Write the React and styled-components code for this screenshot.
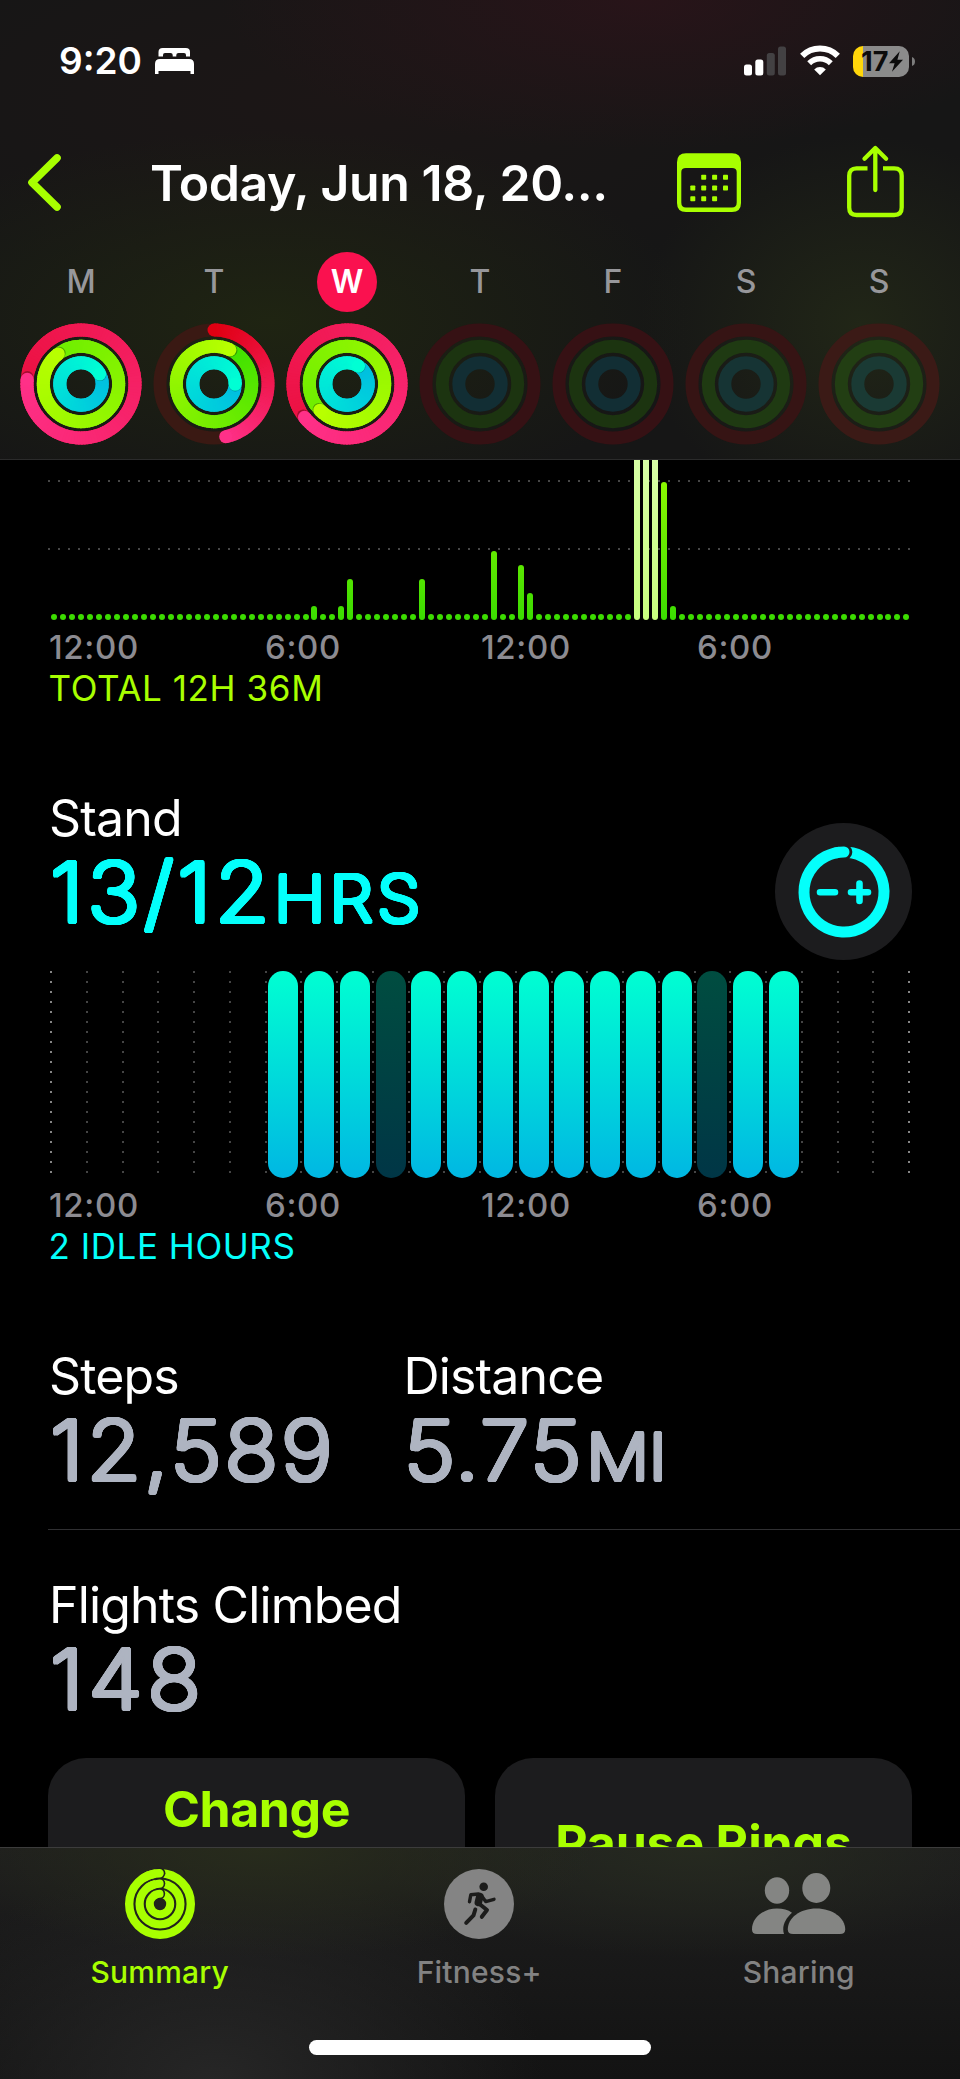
import React from "react";
import styled, { createGlobalStyle } from "styled-components";

const GlobalStyle = createGlobalStyle`
  * { box-sizing: border-box; }
  html, body { margin: 0; padding: 0; background: #000; }
  body { font-family: Inter, "Liberation Sans", sans-serif; -webkit-font-smoothing: antialiased; }
  svg { display: block; flex: none; overflow: visible; }
`;

const Screen = styled.div`
  width: 960px;
  height: 2079px;
  overflow: hidden;
  display: flex;
  flex-direction: column;
  background: #000;
`;

const Label = styled.span`
  display: block;
  white-space: nowrap;
  font-size: ${(p) => p.$size}px;
  font-weight: ${(p) => p.$weight || 400};
  letter-spacing: ${(p) => p.$track || 0}px;
  color: ${(p) => p.$color || "#fff"};
  line-height: ${(p) => p.$line || 40}px;
`;

/* ---------- header ---------- */

const Header = styled.header`
  flex: none;
  height: 460px;
  border-bottom: 1px solid #2b2b2b;
  display: flex;
  flex-direction: column;
  background:
    radial-gradient(420px 150px at 640px 0px, #281419 0%, rgba(38, 20, 24, 0) 100%),
    radial-gradient(420px 190px at 270px 320px, #1f2412 0%, rgba(31, 36, 18, 0) 100%),
    radial-gradient(220px 190px at 860px 325px, #212617 0%, rgba(33, 38, 23, 0) 100%),
    radial-gradient(500px 200px at 330px 100px, #1c1616 0%, rgba(28, 22, 22, 0) 100%),
    #161616;
`;

const StatusBar = styled.div`
  height: 122px;
  display: flex;
  align-items: center;
  padding: 0 45px 0 59px;
`;

const Time = styled(Label)`
  width: 96px;
`;

const StatusIcons = styled.div`
  margin-left: auto;
  display: flex;
  align-items: center;
  gap: 13px;
`;

const BatteryGroup = styled.div`
  display: flex;
  align-items: center;
`;

const Battery = styled.div`
  width: 56px;
  height: 31px;
  border-radius: 10px;
  background: linear-gradient(90deg, #ffd60a 10px, #8b8b8b 10px);
  display: flex;
  align-items: center;
  gap: 1px;
  padding-left: 8px;
`;

const NavBar = styled.nav`
  height: 122px;
  display: flex;
  align-items: center;
  padding: 0 56px 0 28px;
`;

const Title = styled(Label)`
  width: 527px;
  margin-left: 88px;
`;

const NavActions = styled.div`
  display: flex;
  align-items: center;
  gap: 106px;
`;

const Week = styled.div`
  display: grid;
  grid-template-columns: repeat(7, 133px);
  padding: 8px 0 0 14.5px;
`;

const Day = styled.div`
  display: flex;
  flex-direction: column;
  align-items: center;
  gap: 11px;
`;

const DayName = styled.div`
  width: 60px;
  height: 60px;
  border-radius: 50%;
  display: flex;
  align-items: center;
  justify-content: center;
  font-size: 32px;
  font-weight: ${(p) => (p.$today ? 600 : 550)};
  line-height: 60px;
  color: ${(p) => (p.$today ? "#fff" : "#97979b")};
  background: ${(p) => (p.$today ? "#fa114f" : "transparent")};
`;

const polar = (r, deg) => {
  const a = ((deg - 90) * Math.PI) / 180;
  return [61 + r * Math.cos(a), 61 + r * Math.sin(a)];
};

const mix = (a, b, t) =>
  `rgb(${a.map((v, i) => Math.round(v + (b[i] - v) * t)).join(",")})`;

function Ring({ r, tip, lap, from, to, track }) {
  if (tip === undefined) {
    return <circle cx="61" cy="61" r={r} fill="none" stroke={track} strokeWidth="13" />;
  }
  const start = lap ? tip - 352 : 0;
  const steps = 120;
  const size = (tip - start) / steps;
  const [cx, cy] = polar(r, tip);
  const [sx, sy] = polar(r, tip + 2);
  const [ox, oy] = polar(r, 0);
  return (
    <g>
      <circle cx="61" cy="61" r={r} fill="none" stroke={lap ? mix(from, to, 0) : track} strokeWidth="13" />
      {!lap && <circle cx={ox} cy={oy} r="6.5" fill={mix(from, to, 0)} />}
      {Array.from({ length: steps }, (_, i) => {
        const a = start + i * size;
        const [x1, y1] = polar(r, a);
        const [x2, y2] = polar(r, Math.min(a + size * 1.6, tip));
        return (
          <path
            key={i}
            d={`M${x1} ${y1}A${r} ${r} 0 0 1 ${x2} ${y2}`}
            fill="none"
            stroke={mix(from, to, i / (steps - 1))}
            strokeWidth="13"
          />
        );
      })}
      {lap && <circle cx={sx} cy={sy} r="6.3" fill="#000" opacity="0.3" />}
      <circle cx={cx} cy={cy} r="6.5" fill={mix(from, to, 1)} />
    </g>
  );
}

const MOVE_A = [224, 0, 18];
const MOVE_B = [255, 48, 136];
const MOVE_M = [236, 18, 68];
const EX_A = [66, 226, 0];
const EX_B = [184, 255, 0];
const EX_M = [112, 238, 0];
const ST_A = [0, 190, 224];
const ST_B = [0, 255, 212];

const week = [
  { name: "M", move: [275, true, MOVE_M, MOVE_B], ex: [323, true, EX_M, EX_B], stand: [62, true, ST_A, ST_B] },
  { name: "T", move: [167.5, false, MOVE_A, MOVE_B], ex: [25, true, EX_A, EX_B], stand: [91, true, ST_A, ST_B] },
  { name: "W", today: true, move: [232, true, MOVE_M, MOVE_B], ex: [226, true, EX_M, EX_B], stand: [33, true, ST_A, ST_B] },
  { name: "T" },
  { name: "F" },
  { name: "S", warm: 1 },
  { name: "S", warm: 2 },
];

function DayRings({ day }) {
  const ring = (r, v, track) =>
    v ? (
      <Ring r={r} tip={v[0]} lap={v[1]} from={v[2]} to={v[3]} track={track} />
    ) : (
      <Ring r={r} track={track} />
    );
  const red = ["#361114", "#361414", "#3b1a16"][day.warm || 0];
  return (
    <svg width="122" height="122" viewBox="0 0 122 122">
      {ring(54, day.move, day.move ? "#3a1913" : red)}
      {ring(37.7, day.ex, ["#1c3410", "#1f3a12", "#223e13"][day.warm || 0])}
      {ring(21.2, day.stand, ["#122e34", "#163434", "#1a3a34"][day.warm || 0])}
    </svg>
  );
}

/* ---------- content ---------- */

const Main = styled.main`
  height: 1387px;
  flex: none;
  overflow: hidden;
  padding-left: 48px;
  display: flex;
  flex-direction: column;
`;

const ExerciseChart = styled.div`
  width: 864px;
  height: 160px;
  flex: none;
  overflow: hidden;
  display: flex;
  align-items: flex-end;
  justify-content: space-between;
  padding: 0 2.5px 0 3.4px;
  background:
    repeating-linear-gradient(90deg, #474747 0 2px, transparent 2px 10px) 0 20px / 862px 2px no-repeat,
    repeating-linear-gradient(90deg, #474747 0 2px, transparent 2px 10px) 0 88px / 862px 2px no-repeat;
`;

const ExerciseBar = styled.i`
  width: 6px;
  height: ${(p) => p.$h}px;
  flex: none;
  border-radius: 3px;
  background: ${(p) =>
    p.$peak
      ? "linear-gradient(0deg, #c8ff7e, #d8ffa6 160px)"
      : "linear-gradient(0deg, #3adc00, #92fa00 150px)"};
`;

const TimeAxis = styled.div`
  width: 864px;
  height: 40px;
  flex: none;
  margin-top: 7px;
  display: grid;
  grid-template-columns: repeat(4, 216px);
  padding-left: 1px;
`;

const Footnote = styled(Label)`
  flex: none;
  margin-left: 0.5px;
`;

const SectionHead = styled.div`
  width: 864px;
  height: 172px;
  flex: none;
  margin-top: 78px;
  display: flex;
  justify-content: space-between;
`;

const Metric = styled.div`
  width: ${(p) => (p.$w ? `${p.$w}px` : "auto")};
  flex: none;
  padding-left: 1px;
`;

/* Thin strokes thickened evenly in all directions give the rounded numerals. */
const roundOff = (color, r) =>
  Array.from({ length: 24 }, (_, i) => {
    const a = (i * Math.PI) / 12;
    return `${(r * Math.cos(a)).toFixed(2)}px ${(r * Math.sin(a)).toFixed(2)}px 0 ${color}`;
  }).join(", ");

const Value = styled(Label)`
  width: max-content;
  margin: 0 0 -2px 0.5px;
  font-size: 82.5px;
  font-weight: 200;
  line-height: 88px;
  transform: scaleX(1.07);
  transform-origin: 0 50%;
  text-shadow: ${(p) => roundOff(p.$color, 2.35)};
`;

const Unit = styled.span`
  margin-left: ${(p) => p.$gap}px;
  font-size: 65px;
  line-height: 1;
  letter-spacing: ${(p) => p.$track}px;
`;

const RoundButton = styled.button`
  width: 137px;
  height: 137px;
  margin-top: 35px;
  padding: 0;
  border: 0;
  border-radius: 50%;
  background: #1c1c1e;
  display: flex;
  align-items: center;
  justify-content: center;
`;

const StandChart = styled.div`
  width: 864px;
  height: 207px;
  flex: none;
  margin-top: 11px;
  padding-left: 2px;
  display: flex;
`;

const Hour = styled.div`
  width: ${(p) => (p.$last ? 2 : 35.75)}px;
  flex: none;
  padding-left: 3.8px;
  background: repeating-linear-gradient(180deg, ${(p) => (p.$edge ? "#858585" : "#454545")} 0 2px, transparent 2px 10px)
    0 0 / 2px 203px no-repeat;
`;

const HourBar = styled.div`
  width: 30px;
  height: 207px;
  border-radius: 15px;
  background: ${(p) =>
    p.$idle ? "linear-gradient(#004d40, #003646)" : "linear-gradient(#00ffd2, #00b7e3)"};
`;

const MetricRow = styled.div`
  flex: none;
  display: flex;
  margin-top: ${(p) => p.$top}px;
`;

const Divider = styled.hr`
  flex: none;
  width: 100%;
  height: 1px;
  border: 0;
  margin: 37px 0 0;
  background: #303032;
`;

const Cards = styled.div`
  flex: none;
  width: 864px;
  margin-top: 37px;
  display: grid;
  grid-template-columns: 1fr 1fr;
  gap: 30px;
`;

const Card = styled.button`
  height: 170px;
  border: 0;
  border-radius: 38px;
  background: #1c1c1e;
  display: flex;
  align-items: ${(p) => p.$align};
  justify-content: center;
  padding: ${(p) => (p.$align === "center" ? 0 : 21)}px 0 0;
  font-family: inherit;
`;

/* ---------- tab bar ---------- */

const TabBar = styled.footer`
  flex: none;
  height: 232px;
  border-top: 1px solid #3c3c3c;
  display: flex;
  flex-direction: column;
  align-items: center;
  background:
    radial-gradient(330px 110px at 265px 0px, #282c1c 0%, rgba(40, 44, 28, 0) 100%),
    radial-gradient(330px 110px at 700px 0px, #262a20 0%, rgba(38, 42, 32, 0) 100%),
    radial-gradient(330px 220px at 215px 232px, #262626 0%, rgba(38, 38, 38, 0) 100%),
    linear-gradient(#1e1e1e, #131313);
`;

const Tabs = styled.div`
  width: 960px;
  height: 192px;
  display: grid;
  grid-template-columns: repeat(3, 319.5px);
`;

const Tab = styled.div`
  display: flex;
  flex-direction: column;
  align-items: center;
  padding-top: 21px;
  gap: 13px;
`;

const HomeIndicator = styled.div`
  width: 342px;
  height: 15px;
  border-radius: 8px;
  background: #fff;
`;

const LIME = "#a8ff00";
const CYAN = "#04fffb";
const SLATE = "#aeb4c1";
const GREY = "#8c8b91";

/* ---------- icons ---------- */

const BedIcon = () => (
  <svg width="39" height="28" viewBox="0 0 39 28" fill="#fff">
    <path d="M3.5 9.500V5Q3.500 .9 7.700 .9H30.800Q35 .9 35 5V9.500H31V8Q31 6 29 6H23.500Q21.300 6 21.300 8V9.500H17.700V8Q17.700 6 15.500 6H10Q8 6 8 8V9.500Z" />
    <path d="M0 17Q0 12 5 12H34Q39 12 39 17V27H35.500V24H3.500V27H0Z" />
  </svg>
);

const SignalIcon = () => (
  <svg width="43" height="30" viewBox="0 0 43 30">
    <rect x="0" y="18.500" width="8" height="11" rx="2.500" fill="#fff" />
    <rect x="11.300" y="13.500" width="8" height="16" rx="2.500" fill="#fff" />
    <rect x="22.800" y="7" width="8" height="22.500" rx="2.500" fill="#434143" />
    <rect x="34" y="0.500" width="8" height="29" rx="2.500" fill="#434143" />
  </svg>
);

const WifiIcon = () => (
  <svg width="40" height="30" viewBox="0 0 40 30" fill="none" stroke="#fff">
    <path d="M2.200 9.800A25.300 25.300 0 0 1 37.800 9.800" strokeWidth="6" />
    <path d="M9.200 17.200A15.500 15.500 0 0 1 30.800 17.200" strokeWidth="5.600" />
    <path d="M20 29.200L14.200 23.500A8.200 8.200 0 0 1 25.800 23.500Z" fill="#fff" stroke="none" />
  </svg>
);

const BoltIcon = () => (
  <svg width="14" height="21" viewBox="0 0 15 22">
    <path d="M11.500 0L0 12.800H6L3.200 22L15 9H9Z" fill="#0c0c0c" />
  </svg>
);

const BatteryCap = () => (
  <svg width="6" height="31" viewBox="0 0 6 31">
    <path d="M3 11Q6 12 6 15.500T3 20Z" fill="#7d7d7d" />
  </svg>
);

const BackIcon = () => (
  <svg width="34" height="60" viewBox="0 0 34 60" fill="none" stroke={LIME} strokeWidth="7.600" strokeLinecap="round" strokeLinejoin="round">
    <path d="M29 5L4 29.500L29 54" />
  </svg>
);

const CalendarIcon = () => (
  <svg width="64" height="60" viewBox="0 0 64 60">
    <path
      fillRule="evenodd"
      fill={LIME}
      d="M9 .3H55Q64 .3 64 9.300V50Q64 59 55 59H9Q0 59 0 50V9.300Q0 .3 9 .3ZM9 15Q4.300 15 4.300 19V49.500Q4.300 54.500 9 54.500H55Q59.700 54.500 59.700 49.500V19Q59.700 15 55 15Z"
    />
    {[[1, 0], [2, 0], [3, 0], [0, 1], [1, 1], [2, 1], [3, 1], [0, 2], [1, 2], [2, 2]].map(([c, r]) => (
      <rect key={`${c}${r}`} x={13.300 + c * 10.900} y={21.800 + r * 10.700} width="5" height="5" rx="0.800" fill={LIME} />
    ))}
  </svg>
);

const ShareIcon = () => (
  <svg width="57" height="74" viewBox="0 0 57 74" fill="none" stroke={LIME} strokeWidth="4.300" strokeLinejoin="round">
    <path d="M20.500 22.300H9.500Q2.200 22.300 2.200 29.800V61.500Q2.200 69 9.500 69H47.200Q54.700 69 54.700 61.500V29.800Q54.700 22.300 47.200 22.300H36" />
    <path d="M17.500 12.800L28.300 2L39.100 12.800M28.300 3V44" strokeLinecap="round" />
  </svg>
);

const GoalIcon = () => (
  <svg width="92" height="92" viewBox="0 0 92 92" fill="none" stroke={CYAN} strokeLinecap="round">
    <path d="M50 6.200A40 40 0 1 1 46 6" strokeWidth="11" strokeLinecap="butt" />
    <circle cx="46.500" cy="6" r="7.800" fill="#1c1c1e" stroke="none" />
    <path d="M38 6.810A40 40 0 0 1 46 6" strokeWidth="11" />
    <path d="M22 46.200H37M53 46.200H70M61.500 37.500V55" strokeWidth="6.600" />
  </svg>
);

const RingsIcon = () => (
  <svg width="70" height="70" viewBox="0 0 70 70" fill="none" stroke={LIME}>
    {[[30.800, 8.400], [20.400, 8.200], [10.200, 8]].map(([r, w]) => (
      <g key={r}>
        <circle cx="35" cy="35" r={r} strokeWidth={w} />
        <circle cx="34.600" cy={35 - r} r={w / 2 + 1.600} fill="#20221c" stroke="none" />
        <path d={`M${35 - r * 0.5} ${35 - r * 0.866}A${r} ${r} 0 0 1 34.600 ${35 - r}`} strokeWidth={w} strokeLinecap="round" />
      </g>
    ))}
  </svg>
);

const RunnerIcon = () => (
  <svg width="70" height="70" viewBox="0 0 70 70" fill="none" stroke="#1c1c1b" strokeLinecap="round" strokeLinejoin="round">
    <circle cx="35" cy="35" r="35" fill="#848484" stroke="none" />
    <circle cx="39.700" cy="17.800" r="4.300" fill="#1c1c1b" stroke="none" />
    <path d="M35.800 27.500L34.300 33.500" strokeWidth="7.500" />
    <path d="M34.500 25L26.800 25.700L25.500 32.800M37.700 27L41.700 32.600L50 30.300" strokeWidth="3.400" />
    <path d="M35.500 35L43 41L37.800 47.800" strokeWidth="4" />
    <path d="M31.300 40.500L29.500 46.300L22.200 53.800" strokeWidth="4" />
  </svg>
);

const PeopleIcon = () => (
  <svg width="94" height="70" viewBox="0 0 94 70" fill="#848583">
    <ellipse cx="25" cy="21.500" rx="12.200" ry="13.200" />
    <ellipse cx="64.300" cy="19" rx="14" ry="15" />
    <path d="M0 60.500C0 49 11 39.600 25 39.600C31 39.600 36 41 40 43.700C33.500 49.500 29.500 57 32 65H5Q0 65 0 60.500Z" />
    <path d="M35.800 60.500C35.800 49 48 39.600 64.300 39.600S93.200 49 93.200 60.500Q93.200 65 88 65H41Q35.800 65 35.800 60.500Z" />
  </svg>
);

/* ---------- data ---------- */

const activeQuarters = { 29: 14, 32: 14, 33: 41.5, 41: 41.5, 49: 69, 52: 55, 53: 27.5, 65: 200, 66: 200, 67: 200, 68: 138, 69: 14 };
const quarters = Array.from({ length: 96 }, (_, i) => activeQuarters[i] || 6);
const idleHours = [9, 18];
const hourLabels = ["12:00", "6:00", "12:00", "6:00"];

const Axis = () => (
  <TimeAxis>
    {hourLabels.map((t, i) => (
      <Label key={i} $size={33} $weight={550} $track={0.65} $color={GREY}>{t}</Label>
    ))}
  </TimeAxis>
);

const Heading = ({ children }) => (
  <Label $size={50} $line={60} $track={-0.85}>{children}</Label>
);

export default function App() {
  return (
    <Screen>
      <GlobalStyle />
      <Header>
        <StatusBar>
          <Time $size={37} $weight={600}>9:20</Time>
          <BedIcon />
          <StatusIcons>
            <SignalIcon />
            <WifiIcon />
            <BatteryGroup>
              <Battery>
                <Label $size={27} $weight={700} $color="#0c0c0c" $line={31}>17</Label>
                <BoltIcon />
              </Battery>
              <BatteryCap />
            </BatteryGroup>
          </StatusIcons>
        </StatusBar>
        <NavBar>
          <BackIcon />
          <Title $size={50} $weight={600} $line={60} $track={-0.43}>Today, Jun 18, 20...</Title>
          <NavActions>
            <CalendarIcon />
            <ShareIcon />
          </NavActions>
        </NavBar>
        <Week>
          {week.map((d, i) => (
            <Day key={i}>
              <DayName $today={d.today}>{d.name}</DayName>
              <DayRings day={d} />
            </Day>
          ))}
        </Week>
      </Header>

      <Main>
        <ExerciseChart>
          {quarters.map((h, i) => (
            <ExerciseBar key={i} $h={h} $peak={h === 200} />
          ))}
        </ExerciseChart>
        <Axis />
        <Footnote $size={35} $line={43} $track={0.6} $color={LIME}>TOTAL 12H 36M</Footnote>

        <SectionHead>
          <Metric>
            <Heading>Stand</Heading>
            <Value $track={3.7} $color={CYAN}>13/12<Unit $track={3.9} $gap={0.5}>HRS</Unit></Value>
          </Metric>
          <RoundButton aria-label="Adjust goal"><GoalIcon /></RoundButton>
        </SectionHead>
        <StandChart>
          {Array.from({ length: 25 }, (_, h) => (
            <Hour key={h} $edge={h === 0 || h === 24} $last={h === 24}>
              {h >= 6 && h <= 20 && <HourBar $idle={idleHours.includes(h)} />}
            </Hour>
          ))}
        </StandChart>
        <Axis />
        <Footnote $size={35} $line={43} $track={0.55} $color={CYAN}>2 IDLE HOURS</Footnote>

        <MetricRow $top={78}>
          <Metric $w={354.500}>
            <Heading>Steps</Heading>
            <Value $track={2.9} $color={SLATE}>12,589</Value>
          </Metric>
          <Metric>
            <Heading>Distance</Heading>
            <Value $track={2} $color={SLATE}>5.75<Unit $track={0} $gap={3}>MI</Unit></Value>
          </Metric>
        </MetricRow>
        <Divider />
        <MetricRow $top={45}>
          <Metric>
            <Heading>Flights Climbed</Heading>
            <Value $track={4.6} $color={SLATE}>148</Value>
          </Metric>
        </MetricRow>
        <Cards>
          <Card $align="flex-start"><Label $size={50} $weight={700} $line={60} $track={-0.4} $color={LIME}>Change</Label></Card>
          <Card $align="center"><Label $size={50} $weight={700} $line={60} $track={-0.2} $color={LIME}>Pause Rings</Label></Card>
        </Cards>
      </Main>

      <TabBar>
        <Tabs>
          <Tab>
            <RingsIcon />
            <Label $size={30} $weight={450} $track={0.2} $color={LIME}>Summary</Label>
          </Tab>
          <Tab>
            <RunnerIcon />
            <Label $size={30} $weight={450} $track={0.2} $color="#828282">Fitness+</Label>
          </Tab>
          <Tab>
            <PeopleIcon />
            <Label $size={30} $weight={450} $track={0.2} $color="#828282">Sharing</Label>
          </Tab>
        </Tabs>
        <HomeIndicator />
      </TabBar>
    </Screen>
  );
}
